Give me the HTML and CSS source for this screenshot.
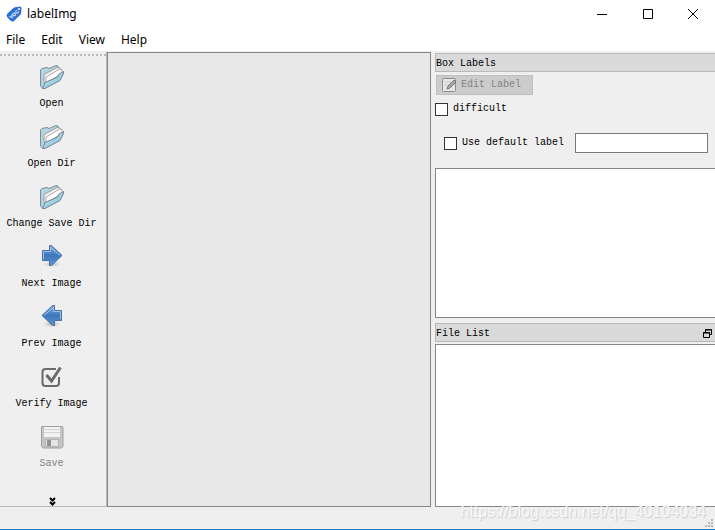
FILE: index.html
```
<!DOCTYPE html>
<html lang="en">
<head>
<meta charset="utf-8">
<title>labelImg</title>
<link rel="stylesheet" href="styles.css">
</head>
<body>
<!-- shared icons -->
<svg class="defs" width="0" height="0">
	<defs>
		<linearGradient id="gfolder" x1="0" y1="0" x2="1" y2="1">
			<stop offset="0" stop-color="#cfe8f2"/><stop offset="1" stop-color="#77b9d8"/>
		</linearGradient>
		<linearGradient id="garrow" x1="0" y1="0" x2="0" y2="1">
			<stop offset="0" stop-color="#83afe0"/><stop offset=".5" stop-color="#3d76ba"/><stop offset="1" stop-color="#5e97d5"/>
		</linearGradient>
		<radialGradient id="gshadow">
			<stop offset="0" stop-color="#aaa"/><stop offset="1" stop-color="#efefef" stop-opacity="0"/>
		</radialGradient>
		<symbol id="folder" viewBox="0 0 26 26">
			<path d="M1.500 22V6L3 4.500l5-1 2 1 7-3 2 .5v4L6 23l-2 1.500z" fill="#b3d5e2" stroke="#7d8b92"/>
			<path d="M5 18v-7.500L18 3.500l3 .5v7L7 20z" fill="#f4f4f4" stroke="#9a9a9a"/>
			<path d="M7 18v-5L20.500 5l2.500.500v4L9 18z" fill="#fff" stroke="#a8a8a8"/>
			<path d="M3.500 24.500L6 18.500 18.500 13l1.500-3 4.500-2.500v2l-3.500 7L6 24.500z" fill="url(#gfolder)" stroke="#76858c"/>
		</symbol>
		<symbol id="arrow" viewBox="0 0 26 26">
			<ellipse cx="13" cy="20" rx="11" ry="4" fill="url(#gshadow)"/>
			<path d="M3.500 6.500h7v-5h2l10.500 10-10.500 10h-2v-5h-7z" fill="url(#garrow)" stroke="#4a6fa3"/>
			<path d="M4.500 15V7.500h7v-4l9.500 8" fill="none" stroke="#9dc0e8"/>
		</symbol>
	</defs>
</svg>

<div class="window">
	<header class="titlebar">
		<svg class="logo" width="16" height="16" viewBox="0 0 16 16">
			<path d="M1 8L8 1.500 14 .5q1.500 0 1.500 1.500L15 8l-7 7q-1.500 1-3 0L1.500 11.500Q0 9.500 1 8z" fill="#2b6fd0"/>
			<circle cx="13" cy="3" r="1" fill="#fff"/>
			<text class="logo-text" x="8" y="10" transform="rotate(-42 8 8)">VOC</text>
		</svg>
		<h1>labelImg</h1>
		<div class="controls">
			<button aria-label="Minimize"><svg width="12" height="12"><path d="M1 6.500h10"/></svg></button>
			<button aria-label="Maximize"><svg width="12" height="12"><path d="M1.500 1.500h9v9h-9z"/></svg></button>
			<button aria-label="Close"><svg width="12" height="12"><path d="M1 1l10 10M11 1L1 11"/></svg></button>
		</div>
	</header>
	<nav class="menu">
		<a href="#">File</a>
		<a href="#">Edit</a>
		<a href="#">View</a>
		<a href="#">Help</a>
	</nav>

	<main class="main">
		<div class="toolbar">
			<button class="tool"><svg width="26" height="26"><use href="#folder"/></svg>Open</button>
			<button class="tool"><svg width="26" height="26"><use href="#folder"/></svg>Open Dir</button>
			<button class="tool"><svg width="26" height="26"><use href="#folder"/></svg>Change Save Dir</button>
			<button class="tool"><svg width="26" height="26"><use href="#arrow"/></svg>Next Image</button>
			<button class="tool"><svg class="flip" width="26" height="26"><use href="#arrow"/></svg>Prev Image</button>
			<button class="tool">
				<svg width="26" height="26" viewBox="0 0 26 26" fill="none" stroke="#6b6b6b">
					<path d="M17 5H6.500q-3 0-3 3v11q0 3 3 3h10.500q3 0 3-3V13" stroke-width="2"/>
					<path d="M7.500 11l5 6L21.500 3.500" stroke-width="3"/>
				</svg>Verify Image</button>
			<button class="tool" disabled>
				<svg width="26" height="26" viewBox="0 0 26 26">
					<path d="M3 2.500h20q1 0 1 1v19l-1.500 1.500H4L2.500 22.500V3q0-.5.5-.5z" fill="#c5c5c5" stroke="#a0a0a0"/>
					<path d="M5 3h16v10H5z" fill="#f3f3f3"/>
					<path d="M5 5.500h16M5 8.500h16" stroke="#d4d4d4"/>
					<path d="M6.500 15.500h13v7h-13z" fill="#e4e4e4" stroke="#b4b4b4"/>
					<path d="M8 16h4v6H8z" fill="#929292"/>
				</svg>Save</button>
			<button class="more" aria-label="More tools"><svg width="7" height="9"><path d="M1 1l2.500 2.500L6 1M1 5l2.500 2.500L6 5"/></svg></button>
		</div>

		<div class="canvas"></div>

		<div class="docks">
			<section class="dock">
				<h2>Box Labels</h2>
				<div class="options">
					<button class="edit" disabled>
						<svg width="16" height="16" viewBox="0 0 16 16">
							<rect x="1.500" y="1.500" width="13" height="13" rx="1" fill="#e6e6e6" stroke="#8b8b8b"/>
							<path d="M3 5h7M3 8h5" stroke="#ccc"/>
							<path d="M6 12l1-3 6-6 2 2-6 6z" fill="#aaa" stroke="#777"/>
						</svg>Edit Label</button>
					<label class="check"><input type="checkbox">difficult</label>
					<div class="default">
						<label class="check"><input type="checkbox">Use default label</label>
						<input type="text" class="field" aria-label="Default label">
					</div>
				</div>
				<div class="list"></div>
			</section>
			<section class="dock files">
				<h2>File List
					<button class="float" aria-label="Float"><svg width="9" height="9"><path d="M2.500 3V.5h6v5H7M2 1h7M.5 3.500h6v5h-6zM0 4h7"/></svg></button>
				</h2>
				<div class="list"></div>
			</section>
		</div>
	</main>

	<footer class="status">
		<span class="mark">https://blog.csdn.net/qq_40104034</span>
		<svg class="grip" width="9" height="9" fill="#b8b8b8"><path d="M6 0h2v2H6zM3 3h2v2H3zM6 3h2v2H6zM0 6h2v2H0zM3 6h2v2H3zM6 6h2v2H6z"/></svg>
	</footer>
</div>
</body>
</html>
```

FILE: styles.css
```
* {
	box-sizing: border-box;
}

body {
	margin: 0;
	background: #efefef;
	color: #000;
	font: 10px/14px "Liberation Mono", monospace;
}

button {
	padding: 0;
	border: 0;
	background: none;
	color: inherit;
	font: inherit;
}

.defs {
	position: absolute;
}

.window {
	display: flex;
	flex-direction: column;
	min-height: 100vh;
	border-bottom: 1px solid #1c7cc8;
}

/* title and menu */
.titlebar {
	display: flex;
	align-items: center;
	height: 27px;
	padding-left: 6px;
	background: #fff;
}

.logo-text {
	fill: #fff;
	font: bold 5px "Liberation Sans", sans-serif;
	text-anchor: middle;
}

h1 {
	flex: 1;
	margin: 0 0 0 5px;
	font: 12px/16px "Noto Sans", sans-serif;
}

.controls {
	display: flex;
}

.controls button {
	width: 46px;
	height: 26px;
}

.controls svg {
	display: block;
	margin: auto;
	fill: none;
	stroke: #000;
}

.controls button:last-child {
	width: 44px;
}

.menu {
	display: flex;
	gap: 16px;
	height: 24px;
	padding: 5px 6px;
	background: #fff;
	font: 12px/16px "Noto Sans", sans-serif;
}

.menu a {
	color: #000;
	text-decoration: none;
}

.main {
	display: flex;
	flex: 1;
	padding-top: 1px;
}

/* left toolbar */
.toolbar {
	display: flex;
	flex-direction: column;
	width: 107px;
	padding-top: 6px;
	border-right: 1px solid #b8b8b8;
	border-bottom: 1px solid #b8b8b8;
	background: repeating-linear-gradient(90deg, #b8b8b8 0 2px, #efefef 2px 4px) 0 2px / 100% 2px no-repeat;
}

.tool {
	display: flex;
	flex-direction: column;
	align-items: center;
	gap: 7px;
	height: 60px;
	padding: 6px 3px 0 0;
}

.tool:disabled {
	color: #808080;
}

.flip {
	transform: scaleX(-1);
}

.more {
	margin: auto auto 0;
	padding-right: 2px;
}

.more svg {
	display: block;
	fill: none;
	stroke: #000;
	stroke-width: 2;
}

.canvas {
	flex: 1;
	border: 1px solid #828790;
	background: #e8e8e8;
}

/* right docks */
.docks {
	display: flex;
	flex-direction: column;
	gap: 5px;
	width: 284px;
	padding: 1px 0 0 4px;
}

.files {
	display: flex;
	flex: 1;
	flex-direction: column;
}

h2 {
	display: flex;
	align-items: center;
	justify-content: space-between;
	height: 19px;
	margin: 0;
	padding: 2px 3px 0 0;
	border: 1px solid #b8b8b8;
	border-right: 0;
	background: #dadada;
	font: inherit;
}

.options {
	height: 96px;
	padding-top: 3px;
}

.edit {
	display: flex;
	align-items: center;
	gap: 4px;
	height: 20px;
	margin: 0 0 7px 1px;
	padding: 0 11px 0 4px;
	border: 1px solid #bfbfbf;
	background: #ccc;
	color: #838383;
}

.check {
	display: flex;
	align-items: center;
	gap: 5px;
}

.check input {
	width: 13px;
	height: 13px;
	margin: 0;
	border: 1px solid #333;
	background: #fff;
	appearance: none;
}

.default {
	display: flex;
	align-items: center;
	gap: 11px;
	padding: 17px 7px 0 9px;
}

.field {
	flex: 1;
	min-width: 0;
	height: 20px;
	border: 1px solid #7a7a7a;
	background: #fff;
}

.list {
	height: 150px;
	border: 1px solid #828790;
	border-right: 0;
	background: #fff;
}

.files .list {
	flex: 1;
	margin-top: 2px;
}

.float svg {
	display: block;
	fill: none;
	stroke: #000;
}

.status {
	position: relative;
	height: 22px;
}

/* lies over the file list and the status bar */
.mark {
	position: absolute;
	right: 9px;
	bottom: 7px;
	color: #f8f8f8;
	font: 16px/20px "Liberation Sans", sans-serif;
	text-shadow: 1px 1px 1px #ccc;
}

.grip {
	position: absolute;
	right: 1px;
	bottom: 1px;
}
```
